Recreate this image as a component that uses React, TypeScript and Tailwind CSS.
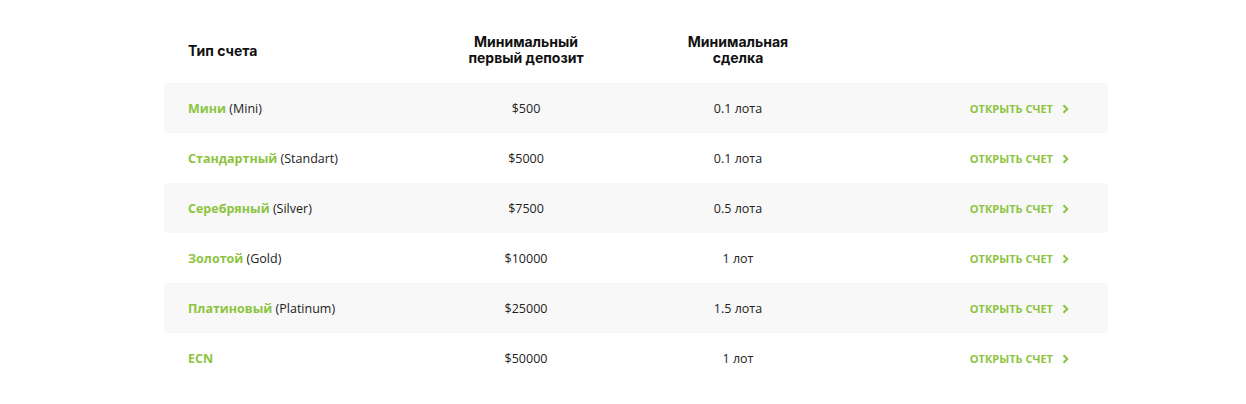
import React from "react";

const rows = [
  { name: "Мини", en: "Mini", deposit: "$500", lot: "0.1 лота" },
  { name: "Стандартный", en: "Standart", deposit: "$5000", lot: "0.1 лота" },
  { name: "Серебряный", en: "Silver", deposit: "$7500", lot: "0.5 лота" },
  { name: "Золотой", en: "Gold", deposit: "$10000", lot: "1 лот" },
  { name: "Платиновый", en: "Platinum", deposit: "$25000", lot: "1.5 лота" },
  { name: "ECN", en: "", deposit: "$50000", lot: "1 лот" },
];

function Chevron() {
  return (
    <svg width="7" height="10" viewBox="0 0 7 10" className="ml-[9px]">
      <path d="M1.5 1.2 L5.3 5 L1.5 8.8" fill="none" stroke="#8cc43f" strokeWidth="2" />
    </svg>
  );
}

export default function App() {
  return (
    <div className="w-[1246px] h-[404px] bg-white pt-[26px] font-['Open_Sans',sans-serif] text-[12.5px] text-[#222]">
      <div className="w-[944px] ml-[164px]">
        {/* Header */}
        <div className="grid grid-cols-[256px_212px_212px_264px] h-[57px] items-center font-['Inter',sans-serif] font-bold text-[14px] leading-[16px] text-[#111]">
          <div className="pl-6 -mt-[8px]">Тип счета</div>
          <div className="text-center -mt-[9px]">
            Минимальный
            <br />
            первый депозит
          </div>
          <div className="text-center -mt-[9px]">
            Минимальная
            <br />
            сделка
          </div>
          <div />
        </div>

        {/* Rows */}
        {rows.map((r, i) => (
          <div
            key={r.name}
            className={`grid grid-cols-[256px_212px_212px_264px] h-[50px] items-center pt-[2px] ${
              i % 2 === 0 ? "bg-[#f8f8f8]" : "bg-white"
            }`}
          >
            <div className="pl-6">
              <span className="font-bold text-[#8cc43f]">{r.name}</span>
              {r.en && <span> ({r.en})</span>}
            </div>
            <div className="text-center">{r.deposit}</div>
            <div className="text-center">{r.lot}</div>
            <div className="flex justify-end items-center pr-[39px]">
              <span className="font-bold text-[11px] text-[#8cc43f] uppercase">Открыть счет</span>
              <Chevron />
            </div>
          </div>
        ))}
      </div>
    </div>
  );
}
